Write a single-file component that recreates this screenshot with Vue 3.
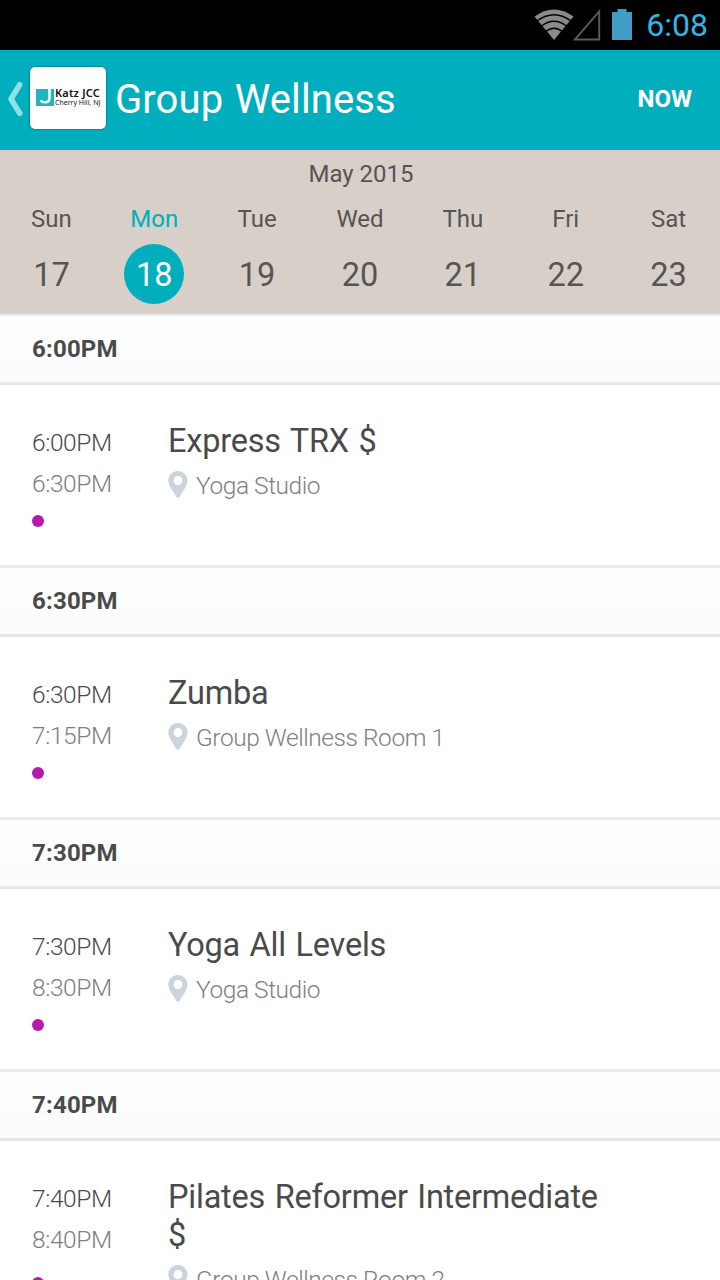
<template>
  <div class="screen">
    <div class="status-bar">
      <svg class="wifi" width="40" height="32" viewBox="0 0 40 32">
        <path d="M0.5 7.5 Q20 -6.5 39.5 7.5 L20 31 Z" fill="#8a8a8a" />
        <g fill="none" stroke="#000" stroke-width="1.4">
          <path d="M3 12 Q20 -0.500 37 12" />
          <path d="M7 17.500 Q20 7 33 17.500" />
          <path d="M11 23 Q20 15.500 29 23" />
        </g>
      </svg>
      <svg class="signal" width="28" height="32" viewBox="0 0 28 32">
        <path d="M26.200 2.500 V30.500 H2 Z" fill="none" stroke="#5c5c5c" stroke-width="1.9" />
      </svg>
      <svg class="battery" width="20" height="31" viewBox="0 0 20 31">
        <path d="M0 3 H5.500 V0 H14.500 V3 H20 V31 H0 Z" fill="#419dc4" />
      </svg>
      <span class="clock">6:08</span>
    </div>

    <header class="app-bar">
      <svg class="back" width="16" height="36" viewBox="0 0 16 36">
        <path d="M12.700 3.700 L4 18 L12.700 32.300" fill="none" stroke="#8de2e6" stroke-width="5.500" stroke-linecap="round" stroke-linejoin="round" />
      </svg>
      <div class="logo">
        <svg width="18" height="17" viewBox="0 0 18 17">
          <rect width="18" height="17" fill="#1fb5bd" />
          <path d="M13.500 0 V9 Q13.500 13.300 9 13.300 Q6 13.300 4.500 11.500" fill="none" stroke="#fff" stroke-width="2.600" />
        </svg>
        <div class="logo-text">
          <span class="logo-name">Katz JCC</span>
          <span class="logo-place">Cherry Hill, NJ</span>
        </div>
      </div>
      <h1>{{ title }}</h1>
      <button class="now">NOW</button>
    </header>

    <section class="calendar">
      <div class="month">May 2015</div>
      <div class="week">
        <div
          v-for="day in days"
          :key="day.date"
          class="day"
          :class="{ active: day.date === selectedDate }"
          @click="selectedDate = day.date"
        >
          <span class="day-name">{{ day.name }}</span>
          <span class="day-date">{{ day.date }}</span>
        </div>
      </div>
    </section>

    <main>
      <section v-for="item in classes" :key="item.start" class="slot">
        <h2 class="slot-time">{{ item.start }}</h2>
        <div class="slot-row" :class="{ tall: item.name.length > 28 }">
          <div class="times">
            <span class="start">{{ item.start }}</span>
            <span class="end">{{ item.end }}</span>
            <span class="dot"></span>
          </div>
          <div class="info">
            <div class="name">{{ item.name }}</div>
            <div class="location">
              <svg width="20" height="28" viewBox="0 0 20 28">
                <path fill-rule="evenodd" d="M10 0 C4.500 0 0.300 4.300 0.300 9.500 C0.300 15 5.500 20.500 8.300 25.800 Q10 28 11.700 25.800 C14.500 20.500 19.500 15 19.500 9.500 C19.500 4.300 15.500 0 10 0 Z M10 5 A4.500 4.500 0 1 1 10 14 A4.500 4.500 0 1 1 10 5 Z" fill="#cbd4dc" />
              </svg>
              <span>{{ item.location }}</span>
            </div>
          </div>
        </div>
      </section>
    </main>
  </div>
</template>

<script setup>
import { ref } from 'vue'

const title = 'Group Wellness'
const selectedDate = ref(18)

const days = [
  { name: 'Sun', date: 17 },
  { name: 'Mon', date: 18 },
  { name: 'Tue', date: 19 },
  { name: 'Wed', date: 20 },
  { name: 'Thu', date: 21 },
  { name: 'Fri', date: 22 },
  { name: 'Sat', date: 23 }
]

const classes = [
  { start: '6:00PM', end: '6:30PM', name: 'Express TRX $', location: 'Yoga Studio' },
  { start: '6:30PM', end: '7:15PM', name: 'Zumba', location: 'Group Wellness Room 1' },
  { start: '7:30PM', end: '8:30PM', name: 'Yoga All Levels', location: 'Yoga Studio' },
  { start: '7:40PM', end: '8:40PM', name: 'Pilates Reformer Intermediate $', location: 'Group Wellness Room 2' }
]
</script>

<style>
body {
  margin: 0;
  overflow: hidden;
}
</style>

<style scoped>
.screen {
  width: 720px;
  height: 1280px;
  overflow: hidden;
  background: #fff;
  color: #4a4a4a;
  font-family: Roboto, sans-serif;
}

.status-bar {
  display: flex;
  align-items: center;
  justify-content: flex-end;
  height: 50px;
  padding-right: 12px;
  box-sizing: border-box;
  background: #000;
}

.wifi {
  margin-right: -1px;
}

.signal {
  margin-right: 11px;
}

.battery {
  margin: 0 14px 2px 0;
}

.clock {
  color: #33b5e5;
  font-size: 32px;
  line-height: 50px;
}

.app-bar {
  display: flex;
  align-items: center;
  height: 100px;
  padding: 0 28px 0 7px;
  box-sizing: border-box;
  background: #00aebd;
  color: #fff;
}

.back {
  margin-bottom: 2px;
}

.logo {
  display: flex;
  align-items: center;
  gap: 1px;
  width: 76px;
  height: 62px;
  margin: 0 9px 4px 7px;
  padding: 0 0 1px 6px;
  box-sizing: border-box;
  border-radius: 5px;
  background: #fff;
  box-shadow: 0 0 1px 1px rgba(0, 80, 90, 0.4);
  color: #111;
  white-space: nowrap;
}

.logo-text {
  display: flex;
  flex-direction: column;
  padding-bottom: 1px;
  font-family: "Noto Sans", sans-serif;
}

.logo-name {
  font-size: 11px;
  font-weight: 600;
  line-height: 11px;
  letter-spacing: 0.2px;
}

.logo-place {
  font-size: 7px;
  line-height: 9px;
}

h1 {
  flex: 1;
  margin: 0;
  font-size: 40px;
  font-weight: 400;
  line-height: 48px;
  letter-spacing: 0.1px;
  word-spacing: 1.5px;
}

.now {
  padding: 0 0 2px;
  border: none;
  background: none;
  color: #fff;
  font: 700 24px/28px Roboto, sans-serif;
}

.calendar {
  height: 164px;
  background: #d8d0c8;
  color: #555;
}

.month {
  padding-top: 10px;
  padding-left: 2px;
  font-size: 24px;
  line-height: 28px;
  text-align: center;
}

.week {
  display: grid;
  grid-template-columns: repeat(7, 1fr);
  padding-top: 17px;
}

.day {
  display: flex;
  flex-direction: column;
  align-items: center;
  gap: 11px;
}

.day-name {
  font-size: 24px;
  line-height: 28px;
}

.day-date {
  width: 60px;
  height: 60px;
  border-radius: 50%;
  font-size: 32.5px;
  line-height: 63px;
  text-align: center;
}

.day.active .day-name {
  color: #00aebd;
}

.day.active .day-date {
  background: #00aebd;
  color: #fff;
}

.slot {
  border-top: 3px solid #e9eaeb;
}

.slot:first-child {
  border-top-width: 2px;
}

.slot-time {
  height: 66px;
  margin: 0;
  padding-left: 32px;
  border-bottom: 3px solid #e6e7e9;
  background: linear-gradient(#fdfffe, #f9fbfd);
  font-size: 24px;
  font-weight: 700;
  line-height: 66px;
  letter-spacing: 0.2px;
}

.slot-row {
  display: flex;
  min-height: 180px;
  padding: 37px 32px 0;
  box-sizing: border-box;
}

.times {
  display: flex;
  flex-direction: column;
  width: 136px;
  font-size: 24.5px;
  font-weight: 300;
  line-height: 41px;
  letter-spacing: -0.4px;
}

.end {
  color: #808080;
}

.dot {
  width: 12px;
  height: 12px;
  margin-top: 11px;
  border-radius: 50%;
  background: #b31aad;
}

/* two-line class names push the dot down */
.tall .dot {
  margin-top: 17px;
}

.info {
  width: 440px;
}

.name {
  font-size: 32.5px;
  line-height: 38px;
  letter-spacing: -0.22px;
  word-spacing: 1.7px;
}

.location {
  display: flex;
  align-items: center;
  gap: 8px;
  height: 30px;
  margin-top: 10px;
  color: #808080;
  font-size: 24.5px;
  font-weight: 300;
  letter-spacing: -0.45px;
}

.location span {
  padding-top: 1px;
}
</style>
